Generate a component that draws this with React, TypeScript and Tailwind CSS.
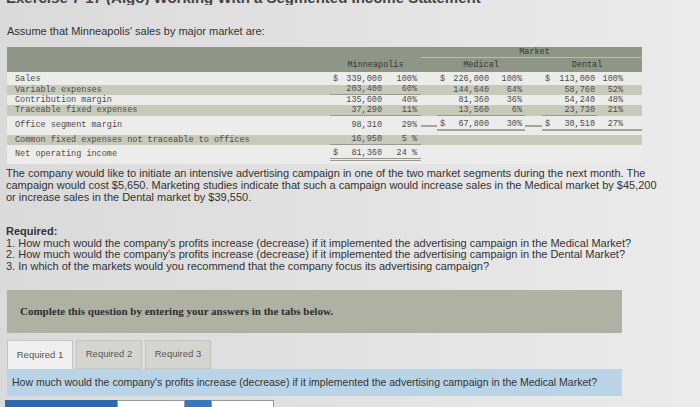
const rows = [
  { label: "Sales", m: ["$", "339,000", "100%"], md: ["$", "226,000", "100%"], dn: ["$", "113,000", "100%"], h: "h-[13px] items-end pb-[1px]", stripe: false, line: false },
  { label: "Variable expenses", m: ["", "203,400", "60%"], md: ["", "144,640", "64%"], dn: ["", "58,760", "52%"], h: "h-[10px] items-center", stripe: true, line: true },
  { label: "Contribution margin", m: ["", "135,600", "40%"], md: ["", "81,360", "36%"], dn: ["", "54,240", "48%"], h: "h-[10px] items-center", stripe: false, line: false },
  { label: "Traceable fixed expenses", m: ["", "37,290", "11%"], md: ["", "13,560", "6%"], dn: ["", "23,730", "21%"], h: "h-[11px] items-center", stripe: true, line: true },
  { label: "Office segment margin", m: ["", "98,310", "29%"], md: ["$", "67,800", "30%"], dn: ["$", "30,510", "27%"], h: "h-[19px] items-center", stripe: false, line: false },
  { label: "Common fixed expenses not traceable to offices", m: ["", "16,950", "5 %"], md: null, dn: null, h: "h-[10px] items-center", stripe: true, line: true },
  { label: "Net operating income", m: ["$", "81,360", "24 %"], md: null, dn: null, h: "h-[19px] items-center", stripe: false, line: false },
];

const cols = "grid grid-cols-[323px_54px_37px_16px_54px_34px_17px_55px_45px]";

const Amount = ({ v }: { v: string[] | null }) => (
  <div className="flex justify-between pl-[3px] pr-[2px]">
    <span>{v ? v[0] : ""}</span>
    <span>{v ? v[1] : ""}</span>
  </div>
);

export default function App() {
  return (
    <div className="w-[700px] h-[407px] overflow-hidden bg-gradient-to-r from-[#dadada] via-[#e2e2e2] to-[#ebebeb] text-[#333] font-['Liberation_Sans',Arial,sans-serif]">
      {/* cut-off exercise title */}
      <div className="h-[5px] overflow-hidden">
        <div className="-mt-[13px] pl-[6px] text-[15px] font-bold text-[#444]">
          Exercise 7-17 (Algo) Working With a Segmented Income Statement
        </div>
      </div>

      <p className="mt-[19px] pl-[7px] text-[11px] leading-[14px]">
        Assume that Minneapolis' sales by major market are:
      </p>

      {/* income statement table */}
      <div className="mt-[9px] ml-[7px] w-[635px] font-['Liberation_Mono',monospace] text-[8.5px] leading-[9px] text-[#4d4d4d]">
        <div className="bg-[#8e9786] h-[25px] text-[#353535]">
          <div className={`${cols} h-[11px]`}>
            <div className="col-span-3" />
            <div className="col-span-6 border-b border-[#b9bdb0] text-center leading-[10px] pl-[6px]">Market</div>
          </div>
          <div className={`${cols} h-[14px] items-center`}>
            <div />
            <div className="col-span-2 text-center">Minneapolis</div>
            <div />
            <div className="col-span-2 text-center">Medical</div>
            <div />
            <div className="col-span-2 text-center pr-[10px]">Dental</div>
          </div>
        </div>

        {rows.map((r, i) => {
          const mLine = r.line ? "border-b border-[#9a9a92]" : i === 6 ? "border-b-[3px] border-double border-[#9a9a92]" : "";
          const sub = i === 4 ? "border-b-2 border-[#a4a69a]" : i === 3 ? "border-b border-[#9a9a92]" : "";
          return (
            <div key={i} className={`${cols} ${r.h} ${r.stripe ? "bg-[#c7c9b9]" : "bg-[#ececea]"}`}>
              <div className="pl-[8px] whitespace-nowrap">{r.label}</div>
              <div className={mLine}>
                <Amount v={r.m} />
              </div>
              <div className={`text-right pr-[4px] ${mLine}`}>{r.m[2]}</div>
              <div className={i === 4 ? "border-b-2 border-[#a4a69a]" : ""} />
              <div className={sub}>
                <Amount v={r.md} />
              </div>
              <div className={`text-right pr-[3px] ${sub}`}>{r.md ? r.md[2] : ""}</div>
              <div className={i === 4 ? "border-b-2 border-[#a4a69a]" : ""} />
              <div className={sub}>
                <Amount v={r.dn} />
              </div>
              <div className={`pr-[19px] text-right ${i === 4 ? "border-b-2 border-[#a4a69a]" : ""}`}>
                {r.dn ? r.dn[2] : ""}
              </div>
            </div>
          );
        })}
      </div>

      <p className="mt-[3px] pl-[6px] text-[11px] leading-[12px]">
        The company would like to initiate an intensive advertising campaign in one of the two market segments during the next month. The
        <br />
        campaign would cost $5,650. Marketing studies indicate that such a campaign would increase sales in the Medical market by $45,200
        <br />
        or increase sales in the Dental market by $39,550.
      </p>

      <div className="mt-[23px] pl-[6px] text-[11px] leading-[11.5px]">
        <p className="font-bold">Required:</p>
        <p>1. How much would the company's profits increase (decrease) if it implemented the advertising campaign in the Medical Market?</p>
        <p>2. How much would the company's profits increase (decrease) if it implemented the advertising campaign in the Dental Market?</p>
        <p>3. In which of the markets would you recommend that the company focus its advertising campaign?</p>
      </div>

      <div className="mt-[18px] ml-[7px] w-[615px] h-[43px] bg-[#afb1a3] pl-[13px] pt-[13px]">
        <p className="font-['Liberation_Serif',serif] font-bold text-[11px] text-[#2e2e2e]">
          Complete this question by entering your answers in the tabs below.
        </p>
      </div>

      <div className="mt-[7px] ml-[7px] flex gap-[3px] text-[9.5px] text-[#555]">
        <div className="w-[66px] h-[29px] flex items-center justify-center bg-[#efefef] border border-b-0 border-[#c4c4c0]">Required 1</div>
        <div className="w-[66px] h-[29px] flex items-center justify-center bg-[#d5d5d0] border border-[#c4c4c0]">Required 2</div>
        <div className="w-[66px] h-[29px] flex items-center justify-center bg-[#d5d5d0] border border-[#c4c4c0]">Required 3</div>
      </div>
      <div className="ml-[7px] w-[615px] h-[27px] bg-[#b9d4e7] flex items-center pl-[5px] text-[10.5px] text-[#333]">
        How much would the company's profits increase (decrease) if it implemented the advertising campaign in the Medical Market?
      </div>

      {/* tops of the answer inputs */}
      <div className="mt-[4px] ml-[5px] flex">
        <div className="w-[112px] h-[10px] bg-[#2f69ad]" />
        <div className="w-[68px] h-[10px] bg-white border border-[#9a9a9a]" />
        <div className="w-[26px] h-[10px] bg-[#3a76bd]" />
        <div className="w-[63px] h-[10px] bg-white border border-[#9a9a9a]" />
      </div>
    </div>
  );
}
